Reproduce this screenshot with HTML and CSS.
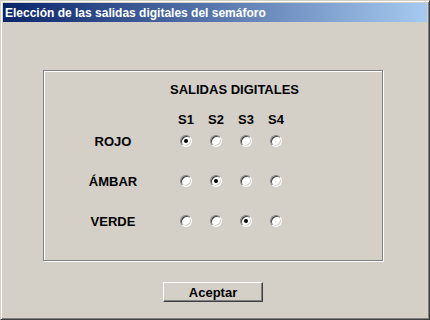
FILE: index.html
```html
<!DOCTYPE html>
<html lang="es">
<head>
<meta charset="UTF-8">
<title>Elección de las salidas digitales del semáforo</title>
<link rel="stylesheet" href="styles.css">
</head>
<body>

<div class="window">
  <div class="titlebar">Elección de las salidas digitales del semáforo</div>

  <div class="client">
    <fieldset class="group">
      <div class="heading">SALIDAS DIGITALES</div>

      <div class="cols">
        <span></span>
        <span>S1</span>
        <span>S2</span>
        <span>S3</span>
        <span>S4</span>
      </div>

      <div class="grid">
        <span class="label">ROJO</span>
        <input type="radio" name="rojo" checked>
        <input type="radio" name="rojo">
        <input type="radio" name="rojo">
        <input type="radio" name="rojo">

        <span class="label">ÁMBAR</span>
        <input type="radio" name="ambar">
        <input type="radio" name="ambar" checked>
        <input type="radio" name="ambar">
        <input type="radio" name="ambar">

        <span class="label">VERDE</span>
        <input type="radio" name="verde">
        <input type="radio" name="verde">
        <input type="radio" name="verde" checked>
        <input type="radio" name="verde">
      </div>
    </fieldset>

    <div class="actions">
      <button class="btn">Aceptar</button>
    </div>
  </div>
</div>

</body>
</html>
```

FILE: styles.css
```css
* { margin: 0; padding: 0; box-sizing: border-box; }
body { width: 430px; height: 320px; background: #d4d0c8; font-family: 'Liberation Sans', Arial, sans-serif; font-size: 13px; font-weight: bold; color: #000; }

/* window frame */
.window { width: 430px; height: 320px; padding: 2px; background: #d4d0c8; border: 1px solid; border-color: #d4d0c8 #404040 #404040 #d4d0c8; box-shadow: inset 1px 1px #fff, inset -1px -1px #808080; display: flex; flex-direction: column; }
.titlebar { height: 19px; padding: 1px 0 0 2px; line-height: 18px; color: #fff; font-size: 12px; font-weight: bold; background: linear-gradient(to right, #0a246a, #a6caf0); white-space: nowrap; overflow: hidden; }

.client { flex: 1; padding: 48px 0 0 40px; }

/* etched group box */
.group { width: 340px; height: 191px; border: 1px solid #808080; box-shadow: inset 1px 1px #fff, 1px 1px #fff; padding: 12px 0 0 39px; }
.heading { height: 30px; line-height: 14px; padding-left: 87px; }

.cols, .grid { display: grid; grid-template-columns: 88px repeat(4, 30px); justify-items: center; align-items: center; }
.cols { height: 14px; line-height: 14px; }
.grid { grid-template-rows: repeat(3, 40px); margin-top: -6px; }
.grid .label { justify-self: start; width: 60px; text-align: center; }

/* classic radio */
input[type="radio"] { appearance: none; -webkit-appearance: none; width: 12px; height: 12px; border-radius: 50%; background: #fff; border: 1px solid; border-color: #808080 #fff #fff #808080; box-shadow: inset 1px 1px #404040, inset -1px -1px #d4d0c8; display: flex; align-items: center; justify-content: center; }
input[type="radio"]:checked::after { content: ""; width: 4px; height: 4px; border-radius: 50%; background: #000; }

.actions { width: 340px; display: flex; justify-content: center; padding-top: 21px; }
.btn { width: 100px; height: 20px; background: #d4d0c8; font-family: inherit; font-size: 13px; font-weight: bold; color: #000; border: 1px solid; border-color: #fff #404040 #404040 #fff; box-shadow: inset -1px -1px #808080; }
```
